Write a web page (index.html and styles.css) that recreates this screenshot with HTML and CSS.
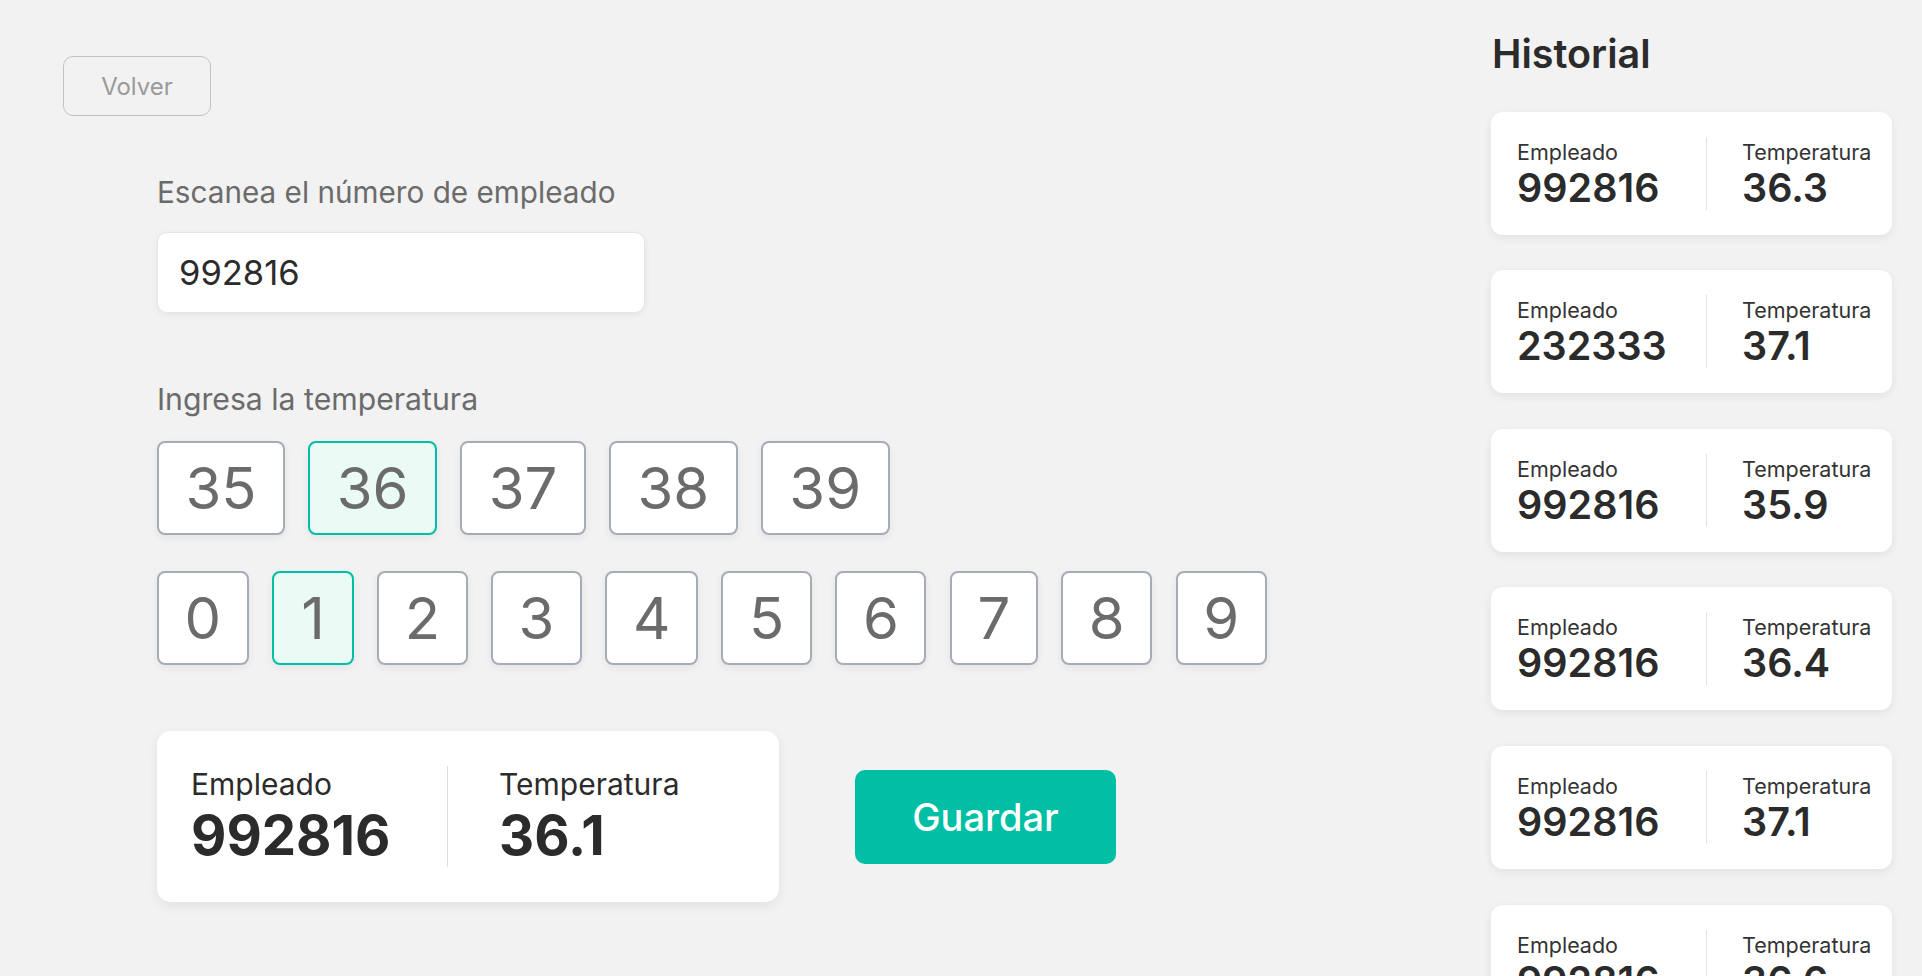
FILE: index.html
```html
<!DOCTYPE html>
<html lang="es">
<head>
<meta charset="utf-8">
<title>Temperatura</title>
<link rel="stylesheet" href="styles.css">
</head>
<body>
<div class="page">
  <main class="main">
    <button class="back">Volver</button>
    <section class="form">
      <div class="field-label scan-label">Escanea el número de empleado</div>
      <input class="emp-input" type="text" value="992816">
      <div class="field-label temp-label">Ingresa la temperatura</div>
      <div class="keys keys-temp">
        <button class="key">35</button>
        <button class="key selected">36</button>
        <button class="key">37</button>
        <button class="key">38</button>
        <button class="key">39</button>
      </div>
      <div class="keys keys-digit">
        <button class="key">0</button>
        <button class="key selected">1</button>
        <button class="key">2</button>
        <button class="key">3</button>
        <button class="key">4</button>
        <button class="key">5</button>
        <button class="key">6</button>
        <button class="key">7</button>
        <button class="key">8</button>
        <button class="key">9</button>
      </div>
      <div class="submit-row">
        <div class="summary">
          <div class="sum-col sum-emp">
            <div class="sum-label">Empleado</div>
            <div class="sum-value">992816</div>
          </div>
          <div class="sum-divider"></div>
          <div class="sum-col sum-temp">
            <div class="sum-label">Temperatura</div>
            <div class="sum-value">36.1</div>
          </div>
        </div>
        <button class="save">Guardar</button>
      </div>
    </section>
  </main>
  <aside class="history">
    <h2 class="history-title">Historial</h2>
    <div class="hcard">
      <div class="h-col h-emp"><div class="h-label">Empleado</div><div class="h-value">992816</div></div>
      <div class="h-divider"></div>
      <div class="h-col h-temp"><div class="h-label">Temperatura</div><div class="h-value">36.3</div></div>
    </div>
    <div class="hcard">
      <div class="h-col h-emp"><div class="h-label">Empleado</div><div class="h-value">232333</div></div>
      <div class="h-divider"></div>
      <div class="h-col h-temp"><div class="h-label">Temperatura</div><div class="h-value">37.1</div></div>
    </div>
    <div class="hcard">
      <div class="h-col h-emp"><div class="h-label">Empleado</div><div class="h-value">992816</div></div>
      <div class="h-divider"></div>
      <div class="h-col h-temp"><div class="h-label">Temperatura</div><div class="h-value">35.9</div></div>
    </div>
    <div class="hcard">
      <div class="h-col h-emp"><div class="h-label">Empleado</div><div class="h-value">992816</div></div>
      <div class="h-divider"></div>
      <div class="h-col h-temp"><div class="h-label">Temperatura</div><div class="h-value">36.4</div></div>
    </div>
    <div class="hcard">
      <div class="h-col h-emp"><div class="h-label">Empleado</div><div class="h-value">992816</div></div>
      <div class="h-divider"></div>
      <div class="h-col h-temp"><div class="h-label">Temperatura</div><div class="h-value">37.1</div></div>
    </div>
    <div class="hcard">
      <div class="h-col h-emp"><div class="h-label">Empleado</div><div class="h-value">992816</div></div>
      <div class="h-divider"></div>
      <div class="h-col h-temp"><div class="h-label">Temperatura</div><div class="h-value">36.6</div></div>
    </div>
  </aside>
</div>
</body>
</html>
```

FILE: styles.css
```css
* { box-sizing: border-box; }

html, body {
  margin: 0;
  padding: 0;
  height: 100%;
  overflow: hidden;
}

body {
  background: #f2f2f2;
  font-family: Inter, "Noto Sans", "Liberation Sans", sans-serif;
  color: #2b2b2b;
}

.page {
  display: flex;
  height: 976px;
  overflow: hidden;
}

.main {
  flex: 1;
  padding: 56px 0 0 63px;
  display: flex;
  flex-direction: column;
  align-items: flex-start;
}

.back {
  width: 148px;
  height: 60px;
  border: 1.5px solid #c3c3c3;
  border-radius: 10px;
  background: transparent;
  color: #9a9a9a;
  font-family: inherit;
  font-size: 24px;
  font-weight: 400;
  padding: 0;
}

.form {
  margin-left: 94px;
  display: flex;
  flex-direction: column;
  align-items: flex-start;
}

.field-label {
  font-size: 29.7px;
  line-height: 36px;
  color: #6b6b6b;
}

.scan-label {
  margin-top: 58px;
}

.emp-input {
  margin-top: 22px;
  width: 488px;
  height: 81px;
  border: 1px solid #e6e6e6;
  border-radius: 10px;
  background: #fff;
  box-shadow: 0 2px 6px rgba(0, 0, 0, 0.06);
  padding: 0 21px;
  font-family: inherit;
  font-size: 34.5px;
  color: #2b2b2b;
  outline: none;
}

.temp-label {
  margin-top: 68px;
  font-size: 30.2px;
}

.keys {
  display: flex;
  gap: 23.4px;
}

.keys-temp {
  margin-top: 24px;
}

.keys-digit {
  margin-top: 36px;
}

.key {
  height: 94px;
  min-width: 81.5px;
  padding: 0 25.6px;
  border: 2px solid #a6abb8;
  border-radius: 8px;
  background: #fff;
  box-shadow: 0 3px 8px rgba(0, 0, 0, 0.06);
  font-family: inherit;
  font-size: 58px;
  font-weight: 400;
  line-height: 1;
  color: #6b6b6b;
}

.keys-temp .key {
  padding: 0 26.4px;
}

.key.selected {
  border-color: #00bfa5;
  background: #e9fbf4;
}

.submit-row {
  margin-top: 66px;
  display: flex;
  align-items: center;
  gap: 76px;
}

.summary {
  width: 622px;
  height: 171px;
  background: #fff;
  border-radius: 14px;
  box-shadow: 0 4px 12px rgba(0, 0, 0, 0.07);
  display: flex;
  align-items: center;
  padding-left: 34px;
}

.sum-emp {
  width: 256px;
}

.sum-divider {
  width: 1px;
  height: 101px;
  background: #dedede;
}

.sum-temp {
  padding-left: 51px;
}

.sum-label {
  font-size: 30px;
  line-height: 27px;
  color: #2b2b2b;
}

.sum-value {
  margin-top: 10px;
  font-size: 54.5px;
  line-height: 54px;
  font-weight: 700;
  color: #2b2b2b;
}

.save {
  width: 261px;
  height: 94px;
  border: none;
  border-radius: 10px;
  background: #00bfa5;
  color: #fff;
  font-family: inherit;
  font-size: 38px;
  font-weight: 500;
  padding: 0;
}

.history {
  width: 401px;
  margin-right: 30px;
  flex-shrink: 0;
  display: flex;
  flex-direction: column;
  gap: 35.6px;
}

.history-title {
  margin: 30px 0 -2px 1px;
  font-size: 39.5px;
  line-height: 48px;
  font-weight: 600;
  color: #2b2b2b;
}

.hcard {
  flex-shrink: 0;
  height: 123px;
  background: #fff;
  border-radius: 12px;
  box-shadow: 0 3px 10px rgba(0, 0, 0, 0.07);
  display: flex;
  align-items: center;
  padding-left: 26px;
}

.h-emp {
  width: 189px;
}

.h-divider {
  width: 1px;
  height: 73px;
  background: #e2e2e2;
}

.h-temp {
  padding-left: 35px;
}

.h-label {
  font-size: 21.5px;
  line-height: 24px;
  color: #333;
}

.h-value {
  margin-top: 5px;
  font-size: 39.5px;
  line-height: 38px;
  font-weight: 600;
  color: #2b2b2b;
}
```
